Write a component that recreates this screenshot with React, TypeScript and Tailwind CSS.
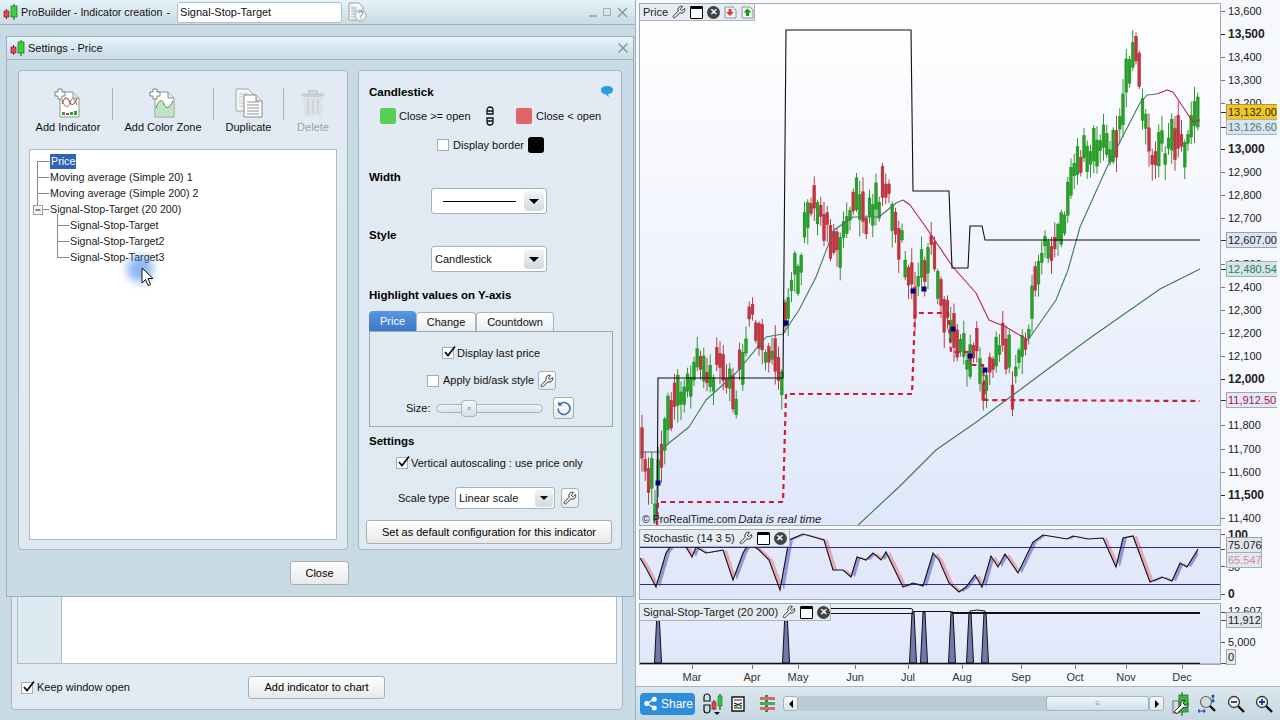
import type { ReactNode } from "react";
import { Share2, Wrench } from "lucide-react";

type Pt = [number, number];

const pricePath: Pt[] = [
  [640, 455], [645, 460], [650, 480], [655, 498], [660, 450], [665, 430], [670, 400], [680, 400], [690, 380],
  [700, 365], [710, 385], [720, 360], [730, 390], [735, 400], [745, 340], [752, 310], [760, 340], [770, 350],
  [778, 380], [782, 385], [785, 310], [790, 290], [800, 260], [808, 200], [815, 205], [825, 230], [835, 245],
  [845, 240], [855, 200], [870, 215], [885, 185], [892, 215], [900, 240], [910, 280], [916, 295], [925, 260],
  [932, 235], [940, 290], [950, 330], [965, 360], [975, 345], [985, 390], [995, 355], [1005, 335], [1012, 385],
  [1020, 360], [1028, 345], [1035, 290], [1040, 260], [1050, 245], [1060, 245], [1068, 200], [1078, 160],
  [1090, 155], [1105, 150], [1115, 145], [1122, 120], [1128, 65], [1135, 42], [1140, 90], [1145, 130],
  [1155, 160], [1165, 145], [1175, 140], [1185, 150], [1192, 130], [1198, 115],
];

const ma20Rise1: Pt[] = [
  [640, 452], [660, 452], [669, 443], [689, 427], [706, 400], [736, 373], [766, 337], [783, 334], [799, 310],
  [816, 277], [834, 230], [853, 217], [879, 217], [896, 203], [903, 200],
];
const ma20Fall1: Pt[] = [[903, 200], [910, 205], [923, 223], [953, 267], [976, 293], [989, 320], [1006, 327], [1028, 340]];
const ma20Rise2: Pt[] = [
  [1028, 340], [1056, 300], [1068, 270], [1080, 227], [1107, 167], [1140, 103], [1147, 95], [1157, 94],
];
const ma20Fall2: Pt[] = [[1157, 94], [1167, 90], [1173, 92], [1187, 113], [1193, 122], [1200, 120]];
const ma200: Pt[] = [
  [856, 527], [900, 486], [936, 450], [975, 423], [1013, 395], [1056, 363], [1090, 338], [1130, 310], [1160, 289], [1200, 269],
];
const stopLine: Pt[] = [
  [657, 526], [658, 378], [783, 378], [786, 30], [911, 30], [913, 191], [949, 191], [952, 268], [968, 268],
  [970, 226], [982, 226], [985, 240], [1200, 240],
];
const targetLine: Pt[] = [
  [657, 526], [658, 502], [783, 502], [786, 394], [912, 394], [915, 313], [948, 313], [951, 352], [968, 352],
  [971, 365], [983, 365], [985, 400], [1200, 401],
];
const signalDots: Pt[] = [[658, 483], [786, 323], [913, 291], [924, 289], [953, 329], [970, 356], [985, 370]];

const stochPath: Pt[] = [
  [640, 558], [646, 568], [656, 587], [666, 553], [673, 543], [686, 547], [692, 557], [696, 547], [706, 553],
  [723, 550], [733, 580], [743, 553], [749, 543], [759, 550], [769, 560], [780, 590], [789, 540], [803, 534],
  [824, 540], [833, 570], [843, 570], [851, 577], [857, 557], [866, 560], [873, 553], [881, 560], [886, 552],
  [903, 587], [913, 583], [923, 586], [933, 553], [939, 560], [949, 583], [959, 592], [966, 587], [975, 575],
  [982, 587], [991, 556], [998, 567], [1005, 554], [1018, 573], [1033, 542], [1043, 535], [1067, 539], [1073, 536],
  [1088, 539], [1103, 538], [1116, 567], [1123, 538], [1133, 536], [1150, 582], [1162, 577], [1172, 581],
  [1180, 563], [1187, 567], [1198, 549],
];

const spikes = [658, 786, 913, 924, 952, 970, 985];

function interp(path: Pt[], x: number) {
  if (x <= path[0][0]) return path[0][1];
  for (let i = 1; i < path.length; i++) {
    if (x <= path[i][0]) {
      const [x0, y0] = path[i - 1];
      const [x1, y1] = path[i];
      return y0 + ((y1 - y0) * (x - x0)) / (x1 - x0);
    }
  }
  return path[path.length - 1][1];
}

function toPoints(path: Pt[]) {
  return path.map((p) => p.join(",")).join(" ");
}

let seed = 4127;
function rnd() {
  seed = (seed * 16807) % 2147483647;
  return seed / 2147483647;
}

const candles = Array.from({ length: 172 }, (_, i) => {
  const x = 642 + i * 3.25;
  const mid = interp(pricePath, x) + (rnd() - 0.5) * 30;
  const half = 4 + rnd() * 13;
  const up = interp(pricePath, x + 3) < interp(pricePath, x - 3) ? rnd() > 0.2 : rnd() > 0.72;
  return {
    x,
    top: mid - half,
    bottom: mid + half,
    high: mid - half - 2 - rnd() * 13,
    low: mid + half + 2 + rnd() * 16,
    up,
  };
});

function stochArea(rising: boolean) {
  let d = "";
  for (let x = 640; x < 1198; x++) {
    const a = interp(stochPath, x);
    const b = interp(stochPath, x + 1);
    const la = interp(stochPath, x - 4);
    const lb = interp(stochPath, x - 3);
    if (a < la === rising) d += `M${x} ${a}L${x + 1} ${b}L${x + 1} ${lb}L${x} ${la}Z`;
  }
  return d;
}

const mainTicks: [string, number, boolean][] = [
  ["13,600", 11, false], ["13,500", 34, true], ["13,400", 57, false], ["13,300", 80, false], ["13,200", 103, false],
  ["13,000", 149, true], ["12,900", 172, false], ["12,800", 195, false], ["12,700", 218, false],
  ["12,500", 264, false], ["12,400", 287, false], ["12,300", 310, false], ["12,200", 333, false],
  ["12,100", 356, false], ["12,000", 379, true], ["11,800", 425, false], ["11,700", 449, false],
  ["11,600", 472, false], ["11,500", 495, true], ["11,400", 518, false],
];

const mainBoxes: [string, number, string, string, string][] = [
  ["13,132.00", 112, "#f6c61e", "#a89a50", "#2b2b10"],
  ["13,126.60", 127, "#d9e4f2", "#a6b2c0", "#4b7d6a"],
  ["12,607.00", 240, "#dde4f4", "#98a2b2", "#222222"],
  ["12,480.54", 269, "#d3e6ea", "#a0b0b8", "#3d7a5a"],
  ["11,912.50", 400, "#e3e8f7", "#a0a8b8", "#a8174a"],
];

const months: [string, number][] = [
  ["Mar", 692], ["Apr", 752], ["May", 798], ["Jun", 855], ["Jul", 908],
  ["Aug", 962], ["Sep", 1021], ["Oct", 1075], ["Nov", 1126], ["Dec", 1182],
];

function Candle() {
  return (
    <svg width="16" height="18" viewBox="0 0 16 18" className="shrink-0">
      <path d="M3.500 6v10M11 1v16" stroke="#333" strokeWidth="1" />
      <rect x="1" y="8" width="5" height="6" fill="#e4474c" stroke="#7a2226" strokeWidth="0.7" />
      <rect x="8" y="3" width="6" height="11" fill="#39d13f" stroke="#1a6e1e" strokeWidth="0.7" />
    </svg>
  );
}

function CheckBox({ checked }: { checked?: boolean }) {
  return (
    <span className="relative inline-block h-3 w-3 shrink-0 border border-[#a4adb4] bg-white align-middle">
      {checked && (
        <svg width="14" height="14" viewBox="0 0 14 14" className="absolute -top-[3px] left-0">
          <path d="M2 7l3 3.500L12 1.500" fill="none" stroke="#111" strokeWidth="1.800" />
        </svg>
      )}
    </span>
  );
}

function Heading({ children, className }: { children: ReactNode; className: string }) {
  return <div className={`ml-[10px] text-[11.5px] font-bold leading-[14px] text-black ${className}`}>{children}</div>;
}

function DropArrow() {
  return (
    <span className="flex h-[20px] w-[20px] items-center justify-center rounded-sm bg-gradient-to-b from-[#f4f6f7] to-[#d2d8dc]">
      <span className="h-0 w-0 border-x-[5px] border-t-[5px] border-x-transparent border-t-black" />
    </span>
  );
}

function SelectBox({ children }: { children: ReactNode }) {
  return (
    <div className="ml-[72px] flex h-[26px] w-[116px] items-center justify-between rounded-[3px] border border-[#a9b1b6] bg-white pl-[3px] pr-[2px]">
      {children}
      <DropArrow />
    </div>
  );
}

function ToolBtn({ className }: { className: string }) {
  return (
    <span className={`flex items-center justify-center rounded-[3px] border border-[#a6afb5] bg-gradient-to-b from-white to-[#e6eaec] ${className}`}>
      <Wrench size={14} strokeWidth={1.3} className="text-black" />
    </span>
  );
}

function Plain({ children, className }: { children: ReactNode; className: string }) {
  return (
    <div className={`flex items-center justify-center rounded-[3px] border border-[#a9afb3] bg-gradient-to-b from-white to-[#e8e8e8] text-black ${className}`}>
      {children}
    </div>
  );
}

function Doc({ children }: { children?: ReactNode }) {
  return (
    <>
      <path d="M7 4h13l6 6v19H7z" fill="#fff" stroke="#8d9397" />
      <path d="M20 4v6h6" fill="#e4e8ea" stroke="#8d9397" />
      {children}
      <path d="M5 1h4v3h3v4H9v3H5V8H2V4h3z" fill="#fff" stroke="#7d8387" />
    </>
  );
}

function ToolItem({ label, width, disabled, children }: { label: string; width: string; disabled?: boolean; children: ReactNode }) {
  return (
    <div className={`flex flex-col items-center ${width}`}>
      <svg width="30" height="30" viewBox="0 0 30 30">
        {children}
      </svg>
      <span className={`mt-[3px] leading-[13px] ${disabled ? "text-[#9aa2a8]" : "text-[#111]"}`}>{label}</span>
    </div>
  );
}

function ToolSep() {
  return <div className="h-[32px] w-px self-start bg-[#a8b2b8]" />;
}

const treeRows = [
  { text: "Moving average (Simple 20) 1", pad: "pl-[20px]" },
  { text: "Moving average (Simple 200) 2", pad: "pl-[20px]" },
  { text: "Signal-Stop-Target (20 200)", pad: "pl-[20px]" },
  { text: "Signal-Stop-Target", pad: "pl-[40px]" },
  { text: "Signal-Stop-Target2", pad: "pl-[40px]" },
  { text: "Signal-Stop-Target3", pad: "pl-[40px]" },
];

function LeftSettings() {
  return (
    <div className="flex h-[480px] w-[330px] flex-col rounded-[4px] border border-[#a7b6c0] bg-gradient-to-b from-[#e2ebf3] to-[#dde8f1] pl-[5px] pt-[17px]">
      <div className="flex h-[62px]">
        <ToolItem label="Add Indicator" width="w-[88px]">
          <Doc>
            <path d="M9 16c3-8 5-8 7-3s4 6 8-3M9 12c3 8 6 9 8 3s4-6 7 2" fill="none" stroke="#c9494f" strokeWidth="1" />
            <path d="M9 14c3-5 6-4 8 0s4 3 7-3" fill="none" stroke="#3f9a3f" strokeWidth="1" />
            <path d="M9 24h3v3H9zM17 24h3v3h-3zM21 23h3v4h-3z" fill="#2fa32f" />
            <path d="M13 25h3v2h-3z" fill="#b4338a" />
          </Doc>
        </ToolItem>
        <ToolSep />
        <ToolItem label="Add Color Zone" width="w-[100px]">
          <Doc>
            <path d="M8 28V20c3-9 6-9 8-4s5 5 9-3v15z" fill="#bfe6c2" />
            <path d="M8 20c3-9 6-9 8-4s5 5 9-3" fill="none" stroke="#3f8a4f" strokeWidth="1" />
          </Doc>
        </ToolItem>
        <ToolSep />
        <ToolItem label="Duplicate" width="w-[69px]">
          <path d="M2 1h12l5 5v17H2z" fill="#f3f4f5" stroke="#a2a7ab" />
          <path d="M5 6h9M5 9h9M5 12h9M5 15h9M5 18h9" stroke="#c4c8cb" />
          <path d="M10 7h12l6 6v16H10z" fill="#fff" stroke="#878d91" />
          <path d="M22 7v6h6" fill="#e6e9eb" stroke="#878d91" />
          <path d="M13 14h12M13 17h12M13 20h12M13 23h12M13 26h12" stroke="#8d9397" />
        </ToolItem>
        <ToolSep />
        <ToolItem label="Delete" width="w-[58px]" disabled>
          <path d="M11 5V3h8v2" fill="none" stroke="#bcc3c8" strokeWidth="1.600" />
          <ellipse cx="15" cy="7" rx="12" ry="2.500" fill="#c9ced2" />
          <path d="M5 9l2 19h16l2-19z" fill="#dde1e4" />
          <path d="M10 11v15M15 11v15M20 11v15" stroke="#bfc5c9" />
        </ToolItem>
      </div>
      <div className="relative ml-[5px] mt-[-1px] h-[391px] w-[308px] border border-[#b3bcc3] bg-white pt-[3px] text-[10.7px] text-[#1a1a1a]">
        <svg width="308" height="120" className="absolute left-0 top-0" fill="none" stroke="#8a8a8a" strokeWidth="1">
          <path d="M7.500 11v44M7.500 11.500h12M7.500 27.500h12M7.500 43.500h12M12.500 59.500h7M27.500 64v44M27.500 75.500h12M27.500 91.500h12M27.500 107.500h12" />
          <rect x="3.500" y="55.500" width="9" height="9" fill="#f2f4f5" stroke="#9aa0a4" />
          <path d="M5.500 60h5" stroke="#222" />
        </svg>
        <div className="relative flex h-4 items-center pl-[20px]">
          <span className="bg-[#2f63b8] px-px leading-[15px] text-white">Price</span>
        </div>
        {treeRows.map((r) => (
          <div key={r.text} className={`relative flex h-4 items-center ${r.pad}`}>
            {r.text}
          </div>
        ))}
      </div>
    </div>
  );
}

function ChainIcon() {
  return (
    <svg width="10" height="20" viewBox="0 0 10 20" fill="none" stroke="#111" strokeWidth="1.300">
      <path d="M2 8V4a3 3 0 0 1 6 0v4H2zM2 12v4a3 3 0 0 0 6 0v-4H2zM2 5h6M2 15h6" />
    </svg>
  );
}

function RightSettings() {
  return (
    <div className="flex h-[480px] w-[264px] flex-col rounded-[4px] border border-[#a7b6c0] bg-gradient-to-b from-[#e2ebf3] to-[#dfe9f2]">
      <div className="relative mt-[14px] flex">
        <Heading className="">Candlestick</Heading>
        <svg width="14" height="13" viewBox="0 0 14 13" className="absolute right-[7px] top-0">
          <path d="M1 5c0-3 3-4 6-4s6 1 6 4-3 4-5 4l1 3-4-3c-2 0-4-1-4-4z" fill="#2b9de0" />
        </svg>
      </div>
      <div className="mt-[8px] flex h-[18px] items-center">
        <span className="ml-[21px] h-4 w-4 rounded-[2px] bg-[#55cf55]" />
        <span className="ml-[3px] w-[68px]">Close &gt;= open</span>
        <span className="ml-[18px]">
          <ChainIcon />
        </span>
        <span className="ml-[21px] h-4 w-4 rounded-[2px] bg-[#e06464]" />
        <span className="ml-[4px]">Close &lt; open</span>
      </div>
      <div className="mt-[12px] flex h-4 items-center">
        <span className="ml-[78px] flex">
          <CheckBox />
        </span>
        <span className="ml-[4px] w-[70px]">Display border</span>
        <span className="ml-[5px] h-4 w-4 rounded-[3px] bg-black" />
      </div>
      <Heading className="mt-[17px]">Width</Heading>
      <div className="mt-[4px]">
        <SelectBox>
          <span className="ml-[8px] h-px w-[73px] bg-black" />
        </SelectBox>
      </div>
      <Heading className="mt-[14px]">Style</Heading>
      <div className="mt-[4px]">
        <SelectBox>
          <span>Candlestick</span>
        </SelectBox>
      </div>
      <Heading className="mt-[16px]">Highlight values on Y-axis</Heading>
      <div className="ml-[10px] mt-[9px] flex h-[20px] items-end">
        <div className="flex h-[20px] w-[47px] items-center justify-center rounded-t-[4px] bg-gradient-to-b from-[#5a97e0] to-[#3c78c8] text-white">Price</div>
        <div className="flex h-[19px] w-[60px] items-center justify-center rounded-t-[4px] border border-b-0 border-[#a9b3ba] bg-gradient-to-b from-white to-[#e8edf0]">Change</div>
        <div className="flex h-[19px] w-[78px] items-center justify-center rounded-t-[4px] border border-b-0 border-[#a9b3ba] bg-gradient-to-b from-white to-[#e8edf0]">Countdown</div>
      </div>
      <div className="ml-[10px] h-[96px] w-[244px] border border-[#9ba8b0]">
        <div className="mt-[13px] flex h-4 items-center">
          <span className="ml-[72px] flex">
            <CheckBox checked />
          </span>
          <span className="ml-[3px]">Display last price</span>
        </div>
        <div className="mt-[10px] flex h-[19px] items-center">
          <span className="ml-[57px] flex">
            <CheckBox />
          </span>
          <span className="ml-[4px] w-[91px]">Apply bid/ask style</span>
          <ToolBtn className="ml-[4px] h-[19px] w-[18px]" />
        </div>
        <div className="mt-[7px] flex h-[22px] items-center">
          <span className="ml-[36px] w-[30px]">Size:</span>
          <span className="relative block h-[9px] w-[107px] rounded-full border border-[#aab3b9] bg-gradient-to-b from-[#eef2f4] to-[#dce3e8]">
            <span className="absolute -top-[5px] left-[24px] flex h-[17px] w-[16px] items-center justify-center rounded-[4px] border border-[#a8b3bb] bg-gradient-to-b from-[#f5f8fa] to-[#d5dfe7] text-[7px] leading-none text-[#78838b]">≡</span>
          </span>
          <span className="ml-[10px] flex h-[22px] w-[21px] items-center justify-center rounded-[3px] border border-[#a6afb5] bg-gradient-to-b from-white to-[#e6eaec]">
            <svg width="16" height="16" viewBox="0 0 16 16" fill="none">
              <path d="M3.500 4.500A6 6 0 1 1 2 8.500" stroke="#3f6fb0" strokeWidth="1.600" />
              <path d="M2 1.500l.3 4.200 4.200-.3z" fill="#2f5fa8" />
            </svg>
          </span>
        </div>
      </div>
      <Heading className="mt-[7px]">Settings</Heading>
      <div className="mt-[7px] flex h-4 items-center">
        <span className="ml-[37px] flex">
          <CheckBox checked />
        </span>
        <span className="ml-[3px]">Vertical autoscaling : use price only</span>
      </div>
      <div className="mt-[16px] flex h-[22px] items-center">
        <span className="ml-[39px] w-[57px]">Scale type</span>
        <div className="flex h-[22px] w-[100px] items-center justify-between rounded-[3px] border border-[#a9b1b6] bg-white pl-[3px] pr-[1px]">
          <span>Linear scale</span>
          <span className="flex h-[18px] w-[18px] items-center justify-center rounded-sm bg-gradient-to-b from-[#f4f6f7] to-[#d2d8dc]">
            <span className="h-0 w-0 border-x-[4px] border-t-[4px] border-x-transparent border-t-black" />
          </span>
        </div>
        <ToolBtn className="ml-[6px] h-[20px] w-[18px]" />
      </div>
      <Plain className="ml-[7px] mt-[11px] h-[24px] w-[246px]">Set as default configuration for this indicator</Plain>
    </div>
  );
}

function SettingsWindow() {
  return (
    <div className="absolute left-[6px] top-[36px] flex h-[561px] w-[628px] flex-col border border-[#9fb0ba] bg-[#c8dae4]">
      <div className="flex h-[23px] shrink-0 items-center border-b border-[#9fb2bc] bg-gradient-to-b from-[#e6f3fa] to-[#c9dbe4] pl-[3px] pr-[4px]">
        <Candle />
        <span className="ml-[2px] text-[#111]">Settings - Price</span>
        <svg width="12" height="12" viewBox="0 0 12 12" className="ml-auto" stroke="#8a9aa3" strokeWidth="1.600">
          <path d="M1.500 1.500l9 9M10.500 1.500l-9 9" />
        </svg>
      </div>
      <div className="ml-[11px] mt-[10px] flex gap-[10px]">
        <LeftSettings />
        <RightSettings />
      </div>
      <div className="mt-[11px] flex justify-center">
        <Plain className="ml-[-1px] h-[24px] w-[59px]">Close</Plain>
      </div>
    </div>
  );
}

function ChartLabel({ label, width, arrows }: { label: string; width: string; arrows?: boolean }) {
  return (
    <div className={`absolute left-0 top-0 flex h-[17px] items-center gap-[4px] border border-l-0 border-t-0 border-[#aab4be] bg-[#e7ecf3] pl-[3px] text-[11px] text-[#222] ${width}`}>
      <span className="whitespace-nowrap">{label}</span>
      <Wrench size={14} strokeWidth={1.3} className="text-black" />
      <span className="h-[13px] w-[13px] rounded-[1px] border border-black bg-gradient-to-b from-black from-20% to-white to-20%" />
      <span className="flex h-[13px] w-[13px] items-center justify-center rounded-full bg-[#444] text-[9px] font-bold leading-none text-white">✕</span>
      {arrows && (
        <>
          <svg width="13" height="13" viewBox="0 0 13 13">
            <path d="M1 1h8l3 3v8H1z" fill="#f2f4f6" stroke="#8a959e" />
            <path d="M4.500 3h3v3h2.500l-4 4-4-4h2.500z" fill="#e2383c" />
          </svg>
          <svg width="13" height="13" viewBox="0 0 13 13">
            <path d="M1 1h8l3 3v8H1z" fill="#f2f4f6" stroke="#8a959e" />
            <path d="M6.500 2.500l4 4H8v3.500H5V6.500H2.500z" fill="#12a012" />
          </svg>
        </>
      )}
    </div>
  );
}

function AxisBox({ text, y, bg, border, color, x = 1226, w = 51 }: { text: string; y: number; bg: string; border: string; color: string; x?: number; w?: number }) {
  return (
    <g>
      <rect x={x + 0.5} y={y - 7.5} width={w} height={15} fill={bg} stroke={border} />
      <text x={x + 2} y={y + 4} fontSize="11" fill={color}>
        {text}
      </text>
    </g>
  );
}

function MainChart() {
  return (
    <svg width="581" height="521" viewBox="640 4 581 521" className="block">
      {candles.map((c) => {
        const col = c.up ? "#25a325" : "#c5333d";
        return (
          <g key={c.x}>
            <path d={`M${c.x} ${c.high}V${c.low}`} stroke={c.up ? "#2f9a2f" : "#b3414a"} strokeWidth="1" />
            <rect x={c.x - 1.4} y={c.top} width="2.8" height={c.bottom - c.top} fill={col} stroke={c.up ? "#1d7d1d" : "#a32a33"} strokeWidth="0.4" />
          </g>
        );
      })}
      <polyline points={toPoints(ma200)} fill="none" stroke="#3f7a52" strokeWidth="1.100" />
      <polyline points={toPoints(ma20Rise1)} fill="none" stroke="#3f7a5a" strokeWidth="1.100" strokeLinejoin="round" />
      <polyline points={toPoints(ma20Rise2)} fill="none" stroke="#3f7a5a" strokeWidth="1.100" strokeLinejoin="round" />
      <polyline points={toPoints(ma20Fall1)} fill="none" stroke="#bf1e5a" strokeWidth="1.100" strokeLinejoin="round" />
      <polyline points={toPoints(ma20Fall2)} fill="none" stroke="#bf1e5a" strokeWidth="1.100" strokeLinejoin="round" />
      <polyline points={toPoints(stopLine)} fill="none" stroke="#111" strokeWidth="1.100" />
      <polyline points={toPoints(targetLine)} fill="none" stroke="#d01c38" strokeWidth="2.200" strokeDasharray="5 4" />
      {signalDots.map(([x, y]) => (
        <rect key={x} x={x - 2.5} y={y - 2.5} width="5" height="5" fill="#00007f" />
      ))}
    </svg>
  );
}

function MainAxis() {
  return (
    <svg width="56" height="523" viewBox="1221 3 56 523" className="block" fontFamily="Liberation Sans, Arial, sans-serif">
      {mainTicks.map(([t, y, bold]) => (
        <g key={t}>
          <path d={`M1221 ${y + 0.5}h4`} stroke={bold ? "#222" : "#777"} />
          <text x="1228" y={y + 4} fontSize={bold ? 12 : 11} fontWeight={bold ? 700 : 400} fill="#222">
            {t}
          </text>
        </g>
      ))}
      {mainBoxes.map(([t, y, bg, border, color]) => (
        <g key={t}>
          <path d={`M1221 ${y + 0.5}h5`} stroke="#333" />
          <AxisBox text={t} y={y} bg={bg} border={border} color={color} />
        </g>
      ))}
    </svg>
  );
}

function StochChart() {
  return (
    <svg width="581" height="69" viewBox="640 530 581 69" className="block">
      <path d={stochArea(true)} fill="#7779cc" opacity="0.75" />
      <path d={stochArea(false)} fill="#e59cab" opacity="0.85" />
      <path d="M640 547.500H1221M640 584.500H1221" stroke="#2b2b8c" strokeWidth="1" />
      <polyline points={toPoints(stochPath)} fill="none" stroke="#111" strokeWidth="1.100" />
    </svg>
  );
}

function StochAxis() {
  return (
    <svg width="56" height="71" viewBox="1221 529 56 71" className="block" fontFamily="Liberation Sans, Arial, sans-serif">
      <text x="1228" y="539" fontSize="12" fontWeight="700" fill="#222">100</text>
      <text x="1228" y="571" fontSize="11" fill="#222">50</text>
      <text x="1228" y="598" fontSize="12" fontWeight="700" fill="#222">0</text>
      <path d="M1221 534.500h4M1221 549.500h4M1221 566.500h4M1221 594.500h4" stroke="#555" />
      <AxisBox text="75.076" y={545} bg="#e1e5ee" border="#9aa2aa" color="#222" w={35} />
      <AxisBox text="65.547" y={560} bg="#e4e7ef" border="#a7aeb6" color="#d98aa0" w={35} />
    </svg>
  );
}

function SignalChart() {
  const area = spikes.map((x) => `M${x - 3.5} 663L${x - 1} 612L${x + 1} 612L${x + 3.5} 663Z`).join("");
  return (
    <svg width="581" height="60" viewBox="640 604 581 60" className="block">
      <path d="M640 663.500H1221V665H640z" fill="#8d90b8" />
      <path d={area} fill="#7378b0" stroke="#111" strokeWidth="1" />
      <path d="M640 663.500H1200" stroke="#111" strokeWidth="1.300" />
      <path d="M790 608.500H911q2 0 2 3M790 613.500H913M913 611.500H951M951 612.500H1200M952 613.500H1200M970 611q7-2 15 0" fill="none" stroke="#111" strokeWidth="1" />
    </svg>
  );
}

function SignalAxis() {
  return (
    <svg width="56" height="62" viewBox="1221 603 56 62" className="block" fontFamily="Liberation Sans, Arial, sans-serif">
      <path d="M1221 612.500h5M1221 620.500h5M1221 642.500h4M1221 663.500h5" stroke="#555" />
      <text x="1228" y="615" fontSize="11" fill="#222">12,607</text>
      <AxisBox text="11,912" y={620} bg="#e2e6ee" border="#a0a8b0" color="#222" w={35} />
      <text x="1228" y="646" fontSize="11" fill="#222">5,000</text>
      <AxisBox text="0" y={657} bg="#e2e6ee" border="#a0a8b0" color="#222" w={9} />
    </svg>
  );
}

function ChartRow({ height, panel, children, axis }: { height: string; panel: string; children: ReactNode; axis: ReactNode }) {
  return (
    <div className={`flex ${height}`}>
      <div className={`relative w-[582px] overflow-hidden border border-[#9eaab4] ${panel}`}>{children}</div>
      <div className="w-[56px] overflow-hidden">{axis}</div>
    </div>
  );
}

function BottomIcons() {
  return (
    <>
      <svg width="20" height="24" viewBox="0 0 20 24" className="ml-[8px]">
        <path d="M1 9V5a3 3 0 0 1 6 0v4H1zM1 13v5a3 3 0 0 0 6 0v-5H1z" fill="none" stroke="#111" strokeWidth="1.200" />
        <path d="M11 8v10M17 2v16" stroke="#222" />
        <rect x="9" y="10" width="4" height="7" fill="#e2474c" stroke="#7a2226" strokeWidth="0.6" />
        <rect x="15" y="4" width="4" height="10" fill="#39c63f" stroke="#1a6e1e" strokeWidth="0.6" />
        <path d="M11 20h6l-3 3z" fill="#111" />
      </svg>
      <svg width="14" height="16" viewBox="0 0 14 16" className="ml-[8px]">
        <path d="M1 1h12v14H1z" fill="#fff" stroke="#111" strokeWidth="1.400" />
        <path d="M3 4h8M3 7l8 3M11 7l-8 3M3 12h8" stroke="#222" strokeWidth="1.100" />
        <path d="M3 12l3-2 2 2 3-2" fill="none" stroke="#2a9a2a" />
      </svg>
      <svg width="17" height="17" viewBox="0 0 17 17" className="ml-[14px]">
        <path d="M6 0h3v17H6z" fill="#2f8f3f" />
        <path d="M1 2h15v3H1zM1 12h15v3H1z" fill="#d8686c" />
        <path d="M1 7h15v3H1z" fill="#52a862" />
      </svg>
    </>
  );
}

function RightTools() {
  return (
    <>
      <svg width="17" height="24" viewBox="0 0 17 24" className="ml-[8px]">
        <path d="M10 0v24" stroke="#333" />
        <rect x="1" y="9" width="6" height="12" fill="#ddd" stroke="#555" strokeWidth="0.8" />
        <rect x="7" y="3" width="9" height="17" fill="#39b83f" stroke="#1a6e1e" strokeWidth="0.8" />
        <path d="M2 20l7-7c-1-3 1-5 4-4.500l-2 2 1 2 2 1 2-2c.5 3-2 5-5 4l-6 6z" fill="#fff" stroke="#111" strokeWidth="0.9" />
      </svg>
      <svg width="20" height="20" viewBox="0 0 20 20" className="ml-[9px]">
        <circle cx="8" cy="8" r="5.500" fill="#d5dade" stroke="#666" strokeWidth="1.200" />
        <path d="M12 12l5 5" stroke="#111" strokeWidth="2.400" />
        <path d="M15 1v7M13.500 2.500L15 1l1.500 1.500M13.500 6.500L15 8l1.500-1.500" fill="none" stroke="#2447b8" strokeWidth="1.200" />
        <path d="M0 17h7M1.500 15.500L0 17l1.500 1.500M5.500 15.500L7 17l-1.500 1.500" fill="none" stroke="#2447b8" strokeWidth="1.200" />
      </svg>
      <svg width="18" height="18" viewBox="0 0 18 18" className="ml-[9px]">
        <circle cx="7" cy="7" r="5.500" fill="#eef2f4" stroke="#333" strokeWidth="1.300" />
        <path d="M4 7h6" stroke="#222" strokeWidth="1.600" />
        <path d="M11 11l6 6" stroke="#111" strokeWidth="2.400" />
      </svg>
      <svg width="18" height="18" viewBox="0 0 18 18" className="ml-[10px]">
        <circle cx="7" cy="7" r="5.500" fill="#eef2f4" stroke="#333" strokeWidth="1.300" />
        <path d="M4 7h6M7 4v6" stroke="#1b35a8" strokeWidth="1.800" />
        <path d="M11 11l6 6" stroke="#111" strokeWidth="2.400" />
      </svg>
    </>
  );
}

function ScrollButton({ dir }: { dir: "left" | "right" }) {
  return (
    <span className="flex h-[15px] w-[15px] shrink-0 items-center justify-center rounded-[3px] border border-[#a6b2ba] bg-gradient-to-b from-[#f7fafb] to-[#dfe7ec]">
      <span className={`h-0 w-0 border-y-[4px] border-y-transparent ${dir === "left" ? "border-r-[4px] border-r-black" : "border-l-[4px] border-l-black"}`} />
    </span>
  );
}

function BottomBar() {
  return (
    <div className="flex h-[33px] items-center bg-gradient-to-b from-[#dae7ee] to-[#c6d8e2] pl-[4px]">
      <div className="flex h-[22px] w-[55px] items-center gap-[3px] rounded-[4px] bg-[#2d8ddb] pl-[3px] text-[12px] text-white">
        <Share2 size={15} strokeWidth={2} fill="#fff" />
        <span>Share</span>
      </div>
      <BottomIcons />
      <span className="ml-[7px]">
        <ScrollButton dir="left" />
      </span>
      <div className="flex h-[15px] w-[351px] justify-end bg-[#b9cbd4]">
        <div className="flex h-full w-[103px] items-center justify-center rounded-[3px] border border-[#a6b6c0] bg-gradient-to-b from-[#eff5f8] to-[#cfdfe7] text-[8px] leading-none text-[#8a98a2]">≡</div>
      </div>
      <ScrollButton dir="right" />
      <RightTools />
    </div>
  );
}

function Cursor() {
  return (
    <>
      <div className="absolute left-[127px] top-[256px] h-[26px] w-[26px] rounded-full bg-[#3f86e8] opacity-60 blur-[4px]" />
      <svg width="14" height="20" viewBox="0 0 14 20" className="absolute left-[141px] top-[267px]">
        <path d="M1 1v15l3.500-3.500 2.500 6 2.500-1-2.500-6H12z" fill="#fff" stroke="#111" strokeWidth="1" />
      </svg>
    </>
  );
}

export default function App() {
  return (
    <div className="relative flex h-[720px] w-[1280px] overflow-hidden whitespace-nowrap bg-[#c8dae4] font-['Liberation_Sans',Arial,sans-serif] text-[11px] text-[#111]">
      {/* back window */}
      <div className="flex h-full w-[636px] flex-col border-r border-[#9fb0ba]">
        <div className="flex h-[25px] items-center border-b border-[#9fb2bc] bg-gradient-to-b from-[#e6f3fa] to-[#c9dbe4] pl-[3px] pr-[7px]">
          <Candle />
          <span className="ml-[2px] text-[10.7px]">ProBuilder - Indicator creation</span>
          <span className="ml-[4px]">-</span>
          <div className="ml-[7px] flex h-[21px] w-[165px] items-center rounded-[3px] border border-[#b0bcc4] bg-white pl-[2px]">Signal-Stop-Target</div>
          <svg width="20" height="20" viewBox="0 0 20 20" className="ml-[5px]">
            <path d="M2 1h10l4 4v7M2 1v17h8" fill="#f4f6f7" stroke="#9aa4aa" />
            <path d="M4 6h6M4 9h5M4 12h4M4 15h4" stroke="#aab2b8" />
            <circle cx="13.500" cy="13.500" r="5.500" fill="#f4f6f7" stroke="#9aa4aa" />
            <text x="11" y="17" fontSize="10" fill="#7e888e">?</text>
          </svg>
          <span className="ml-auto h-[2px] w-[8px] translate-y-[4px] bg-[#9fb0b9]" />
          <span className="ml-[6px] h-[8px] w-[8px] border border-[#9fb0b9]" />
          <svg width="11" height="11" viewBox="0 0 11 11" className="ml-[6px]" stroke="#8a9aa3" strokeWidth="1.500">
            <path d="M1 1l9 9M10 1l-9 9" />
          </svg>
        </div>
        <div className="ml-[11px] mt-auto flex h-[120px] w-[612px] flex-col justify-end rounded-b-[4px] border border-[#a7b6c0] bg-[#e0ebf3]">
          <div className="ml-[5px] flex h-[74px] w-[600px] border border-[#b0bcc4]">
            <div className="w-[44px] border-r border-[#b0bcc4] bg-[#deeaf2]" />
            <div className="flex-1 bg-white" />
          </div>
          <div className="flex h-[45px] items-center pt-[2px]">
            <span className="ml-[9px] flex">
              <CheckBox checked />
            </span>
            <span className="ml-[4px] w-[95px]">Keep window open</span>
            <Plain className="ml-[116px] h-[23px] w-[137px]">Add indicator to chart</Plain>
          </div>
        </div>
        <div className="h-[10px]" />
      </div>

      <SettingsWindow />
      <Cursor />

      {/* chart side */}
      <div className="flex flex-1 flex-col bg-[#f6f8fb] pl-[3px] pt-[3px]">
        <ChartRow
          height="h-[523px]"
          panel="bg-gradient-to-b from-white via-[#f1f4fd] to-[#dfe7fb]"
          axis={<MainAxis />}
        >
          <MainChart />
          <ChartLabel label="Price" width="w-[115px]" arrows />
          <div className="absolute bottom-[-1px] left-[2px] flex h-[13px] items-center text-[10.5px] text-[#222]">
            © ProRealTime.com <span className="ml-[2px] text-[11.5px] italic">Data is real time</span>
          </div>
        </ChartRow>
        <div className="h-[3px]" />
        <ChartRow height="h-[71px]" panel="bg-gradient-to-b from-[#e6ebfa] to-[#dfe6f9]" axis={<StochAxis />}>
          <StochChart />
          <ChartLabel label="Stochastic (14 3 5)" width="w-[150px]" />
        </ChartRow>
        <div className="h-[3px]" />
        <ChartRow height="h-[62px]" panel="bg-gradient-to-b from-[#e8edfb] to-[#e0e7fa]" axis={<SignalAxis />}>
          <SignalChart />
          <ChartLabel label="Signal-Stop-Target (20 200)" width="w-[191px]" />
        </ChartRow>
        <svg width="582" height="21" viewBox="639 666 582 21" className="block" fontFamily="Liberation Sans, Arial, sans-serif">
          {months.map(([m, x]) => (
            <g key={m}>
              <path d={`M${x + 0.5} 666v4`} stroke="#777" />
              <text x={x} y="682" fontSize="11" fill="#333" textAnchor="middle">
                {m}
              </text>
            </g>
          ))}
        </svg>
        <div className="-ml-[3px] h-px bg-[#a9b6be]" />
        <div className="-ml-[3px]">
          <BottomBar />
        </div>
      </div>
    </div>
  );
}
